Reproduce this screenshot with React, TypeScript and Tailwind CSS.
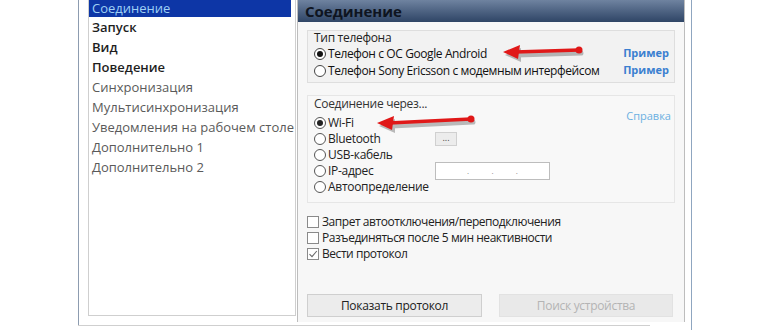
import React from 'react';

const font = { fontFamily: '"Open Sans", "Noto Sans", sans-serif' };

const menu: { label: string; strong?: boolean }[] = [
  { label: 'Соединение' },
  { label: 'Запуск', strong: true },
  { label: 'Вид', strong: true },
  { label: 'Поведение', strong: true },
  { label: 'Синхронизация' },
  { label: 'Мультисинхронизация' },
  { label: 'Уведомления на рабочем столе' },
  { label: 'Дополнительно 1' },
  { label: 'Дополнительно 2' },
];

const Radio = ({ checked, label }: { checked?: boolean; label: string }) => (
  <div className="flex items-center h-[16px]">
    <span className="w-[12px] h-[12px] rounded-full border border-[#555] bg-white flex items-center justify-center shrink-0">
      {checked && <span className="w-[6px] h-[6px] rounded-full bg-[#222]" />}
    </span>
    <span className="ml-[2px] text-[12px] text-[#222] leading-[16px] tracking-[-0.3px] whitespace-nowrap">{label}</span>
  </div>
);

const Check = ({ checked, label }: { checked?: boolean; label: string }) => (
  <div className="flex items-center h-[16px]">
    <span className="w-[12px] h-[12px] border border-[#8a8a8a] bg-white flex items-center justify-center shrink-0">
      {checked && (
        <svg width="10" height="10" viewBox="0 0 10 10">
          <path d="M1.5 5.2 L4 7.6 L8.8 2" stroke="#6a6a6a" strokeWidth="1.1" fill="none" />
        </svg>
      )}
    </span>
    <span className="ml-[3px] text-[12px] text-[#222] leading-[16px] tracking-[-0.45px] whitespace-nowrap">{label}</span>
  </div>
);

const Arrow = ({ x, y, w, tilt }: { x: number; y: number; w: number; tilt: number }) => (
  <svg
    className="absolute"
    style={{ left: x, top: y - 12 }}
    width={w + 10}
    height={26}
    viewBox={`0 0 ${w + 10} 26`}
  >
    <g opacity="0.25" transform="translate(2,3)">
      <line x1="12" y1="12" x2={w - 4} y2={12 - tilt} stroke="#000" strokeWidth="5" strokeLinecap="round" />
      <polygon points="0,12 16,5 16,19" fill="#000" />
    </g>
    <line x1="12" y1="12" x2={w - 4} y2={12 - tilt} stroke="#e01818" strokeWidth="3.5" strokeLinecap="round" />
    <polygon points="0,12 17,5 15,19" fill="#e01818" />
    <circle cx={w - 4} cy={12 - tilt} r="3.5" fill="#e01818" />
  </svg>
);

const PhoneRow = ({ checked, label }: { checked?: boolean; label: string }) => (
  <div className="flex justify-between items-center h-[17px]">
    <div className="flex items-center">
      <span className="w-[12px] h-[12px] rounded-full border border-[#444] bg-white flex items-center justify-center">
        {checked && <span className="w-[6px] h-[6px] rounded-full bg-[#111]" />}
      </span>
      <span className="ml-[2px] text-[12px] text-[#111] tracking-[-0.4px] whitespace-nowrap">{label}</span>
    </div>
    <span className="text-[11px] font-bold text-[#3a7fd0]">Пример</span>
  </div>
);

export default function App() {
  return (
    <div className="relative w-[770px] h-[330px] bg-white overflow-hidden" style={font}>
      <div className="ml-[78px] w-[614px] h-[326px] border-l border-[#8d9cb0] flex">
        {/* left list */}
        <div className="ml-[9px] w-[208px] h-[316px] border-l border-r border-b border-[#cfcfcf]">
          {menu.map((m, i) =>
            i === 0 ? (
              <div
                key={m.label}
                className="h-[17px] mr-[4px] mb-px bg-[#0d36a6] text-[#9fd0f5] flex items-center pl-[3px] text-[13px]"
              >
                {m.label}
              </div>
            ) : (
              <div
                key={m.label}
                className={`h-[20px] flex items-center pl-[3px] text-[13px] ${
                  m.strong ? 'text-[#1e1e1e] font-semibold' : 'text-[#5a5a5a]'
                }`}
              >
                {m.label}
              </div>
            )
          )}
        </div>

        {/* right panel */}
        <div className="ml-px w-[388px] h-[322px] border-l border-r border-[#bdbdbd] bg-[#f7f7f7] flex flex-col">
          <div className="h-[22px] bg-gradient-to-b from-[#6f83a0] to-[#2f4566] flex items-center pl-[7px]">
            <span className="text-[15px] font-bold text-[#0e1420]">Соединение</span>
          </div>

          <div className="mx-[9px] mt-[8px] h-[53px] border border-[#dedede] bg-[#f2f2f2] pl-[6px] pr-[5px]">
            <div className="text-[12px] text-[#222] h-[12px] leading-[12px] mt-px tracking-[-0.3px]">Тип телефона</div>
            <div className="mt-[1px]">
              <PhoneRow checked label="Телефон с ОС Google Android" />
              <PhoneRow label="Телефон Sony Ericsson с модемным интерфейсом" />
            </div>
          </div>

          <div className="mx-[9px] mt-[12px] h-[108px] border border-[#e6e6e6] bg-[#f8f8f8] pl-[6px] pr-[3px] pt-[1px]">
            <div className="text-[12px] text-[#333] h-[14px] leading-[14px] tracking-[-0.3px]">Соединение через...</div>
            <div className="flex">
              <div className="w-[121px] flex flex-col mt-[4px]">
                <Radio checked label="Wi-Fi" />
                <Radio label="Bluetooth" />
                <Radio label="USB-кабель" />
                <Radio label="IP-адрес" />
                <Radio label="Автоопределение" />
              </div>
              <div className="flex flex-col">
                <div className="mt-[21px] w-[22px] h-[14px] border border-[#d0d0d0] bg-[#ececec] flex items-center justify-center text-[9px] text-[#444] leading-none pb-[3px]">
                  ...
                </div>
                <div className="mt-[16px] w-[115px] h-[18px] border border-[#bdbdbd] bg-white flex items-end justify-around px-[20px] pb-[4px]">
                  <span className="text-[8px] leading-none text-[#888]">.</span>
                  <span className="text-[8px] leading-none text-[#888]">.</span>
                  <span className="text-[8px] leading-none text-[#888]">.</span>
                </div>
              </div>
              <div className="ml-auto -mt-[2px] text-[11px] leading-[14px] text-[#6bb0e2]">Справка</div>
            </div>
          </div>

          <div className="ml-[9px] mt-[11px] flex flex-col">
            <Check label="Запрет автоотключения/переподключения" />
            <Check label="Разъединяться после 5 мин неактивности" />
            <Check checked label="Вести протокол" />
          </div>

          <div className="ml-[9px] mt-[32px] flex gap-[17px]">
            <div className="w-[175px] h-[23px] border border-[#cfcfcf] bg-[#ececec] flex items-center justify-center text-[12px] tracking-[-0.3px] text-[#222]">
              Показать протокол
            </div>
            <div className="w-[174px] h-[23px] border border-[#e2e2e2] bg-[#e9e9e9] flex items-center justify-center text-[12px] tracking-[-0.3px] text-[#b4b4b4]">
              Поиск устройства
            </div>
          </div>
        </div>
        <div className="ml-[6px] w-px h-[330px] bg-[#8fa6c0]" />
      </div>
      <div className="ml-[78px] w-[572px] h-px bg-[#cfcfcf] -mt-px" />

      <Arrow x={503} y={52} w={80} tilt={2} />
      <Arrow x={377} y={123} w={98} tilt={4} />
    </div>
  );
}
